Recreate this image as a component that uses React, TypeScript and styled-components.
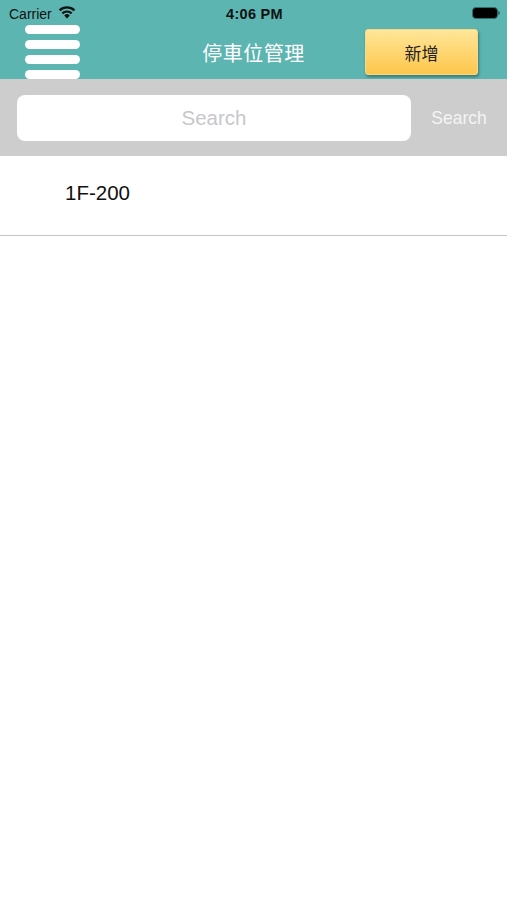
import React from "react";
import styled, { createGlobalStyle } from "styled-components";

const GlobalStyle = createGlobalStyle`
    html, body {
        margin: 0;
        padding: 0;
        background: #ffffff;
    }
    body {
        font-family: "Liberation Sans", "Noto Sans CJK TC", sans-serif;
    }
`;

export default function App() {
    return (
        <>
            <GlobalStyle />
            <Page>
                <Header>
                    <StatusBar />
                    <NavBar />
                </Header>
                <SearchBar />
                <ParkingList items={["1F-200"]} />
            </Page>
        </>
    );
}

function StatusBar() {
    return (
        <StatusRow>
            <Carrier>
                Carrier
                <svg width="18" height="13" viewBox="0 0 18 13">
                    <path
                        d="M9 12.5 L6.2 9.4 A4 4 0 0 1 11.8 9.4 Z"
                        fill="#111"
                    />
                    <path
                        d="M3.6 6.6 A7.8 7.8 0 0 1 14.4 6.6 L12.9 8.2 A5.6 5.6 0 0 0 5.1 8.2 Z"
                        fill="#111"
                    />
                    <path
                        d="M0.8 3.6 A11.8 11.8 0 0 1 17.2 3.6 L15.7 5.2 A9.6 9.6 0 0 0 2.3 5.2 Z"
                        fill="#111"
                    />
                </svg>
            </Carrier>
            <Clock>4:06 PM</Clock>
            <Battery>
                <BatteryBody />
                <BatteryCap />
            </Battery>
        </StatusRow>
    );
}

function NavBar() {
    return (
        <NavRow>
            <MenuIcon>
                <MenuBar />
                <MenuBar />
                <MenuBar />
                <MenuBar />
            </MenuIcon>
            <Title>停車位管理</Title>
            <AddButton>新增</AddButton>
        </NavRow>
    );
}

function SearchBar() {
    return (
        <SearchRow>
            <SearchInput placeholder="Search" />
            <SearchButton>Search</SearchButton>
        </SearchRow>
    );
}

function ParkingList({ items }: { items: string[] }) {
    return (
        <List>
            {items.map((item) => (
                <ListRow key={item}>{item}</ListRow>
            ))}
        </List>
    );
}

const Page = styled.div`
    width: 507px;
    min-height: 900px;
    background: #ffffff;
`;

// 上方綠色區塊
const Header = styled.div`
    background: #5cb5b1;
    height: 79px;
    overflow: hidden;
`;

const StatusRow = styled.div`
    height: 25px;
    display: grid;
    grid-template-columns: 1fr auto 1fr;
    align-items: center;
    padding: 3px 7px 0 9px;
    box-sizing: border-box;
`;

const Carrier = styled.div`
    display: flex;
    align-items: center;
    gap: 6px;
    font-size: 14px;
    color: #111;
    svg {
        margin-top: -4px;
    }
`;

const Clock = styled.div`
    font-size: 14.5px;
    font-weight: bold;
    color: #111;
    letter-spacing: 0.3px;
`;

const Battery = styled.div`
    justify-self: end;
    display: flex;
    align-items: center;
    margin-top: -2px;
`;

const BatteryBody = styled.div`
    width: 24px;
    height: 10px;
    border-radius: 4px;
    background: #000;
    border: 1.5px solid #2f6f6c;
`;

const BatteryCap = styled.div`
    width: 2px;
    height: 4px;
    border-radius: 0 2px 2px 0;
    background: #2f6f6c;
`;

const NavRow = styled.div`
    height: 54px;
    display: grid;
    grid-template-columns: 1fr auto 1fr;
    align-items: center;
`;

const MenuIcon = styled.div`
    display: flex;
    flex-direction: column;
    gap: 6px;
    width: 55px;
    margin-left: 25px;
    align-self: start;
`;

const MenuBar = styled.div`
    height: 9px;
    border-radius: 5px;
    background: #ffffff;
`;

const Title = styled.div`
    color: #ffffff;
    font-size: 20px;
    font-weight: normal;
    font-family: "Noto Sans CJK TC", sans-serif;
    letter-spacing: 0.5px;
`;

const AddButton = styled.button`
    justify-self: end;
    margin-right: 29px;
    width: 113px;
    height: 46px;
    border: 1px solid #f6d98a;
    border-radius: 3px;
    background: linear-gradient(#ffe699, #fdc64b);
    box-shadow: 1px 2px 3px rgba(0, 0, 0, 0.35);
    color: #222;
    font-size: 17px;
    font-weight: normal;
    font-family: "Noto Sans CJK TC", sans-serif;
    padding: 0;
`;

// 搜尋列
const SearchRow = styled.div`
    background: #cdcdcd;
    height: 77px;
    display: flex;
    align-items: center;
    padding-left: 17px;
    box-sizing: border-box;
`;

const SearchInput = styled.input`
    width: 394px;
    height: 46px;
    border: none;
    border-radius: 8px;
    background: #ffffff;
    box-sizing: border-box;
    text-align: center;
    font-size: 20.5px;
    font-family: "Liberation Sans", sans-serif;
    outline: none;
    &::placeholder {
        color: #c7c7cc;
    }
`;

const SearchButton = styled.div`
    flex: 1;
    text-align: center;
    color: #f4f4f4;
    font-size: 17.5px;
    padding-top: 2px;
`;

const List = styled.div`
    display: block;
`;

const ListRow = styled.div`
    height: 80px;
    display: flex;
    align-items: center;
    padding-left: 65px;
    padding-bottom: 6px;
    box-sizing: border-box;
    border-bottom: 1px solid #c4c4c4;
    font-size: 20.5px;
    color: #111;
`;
